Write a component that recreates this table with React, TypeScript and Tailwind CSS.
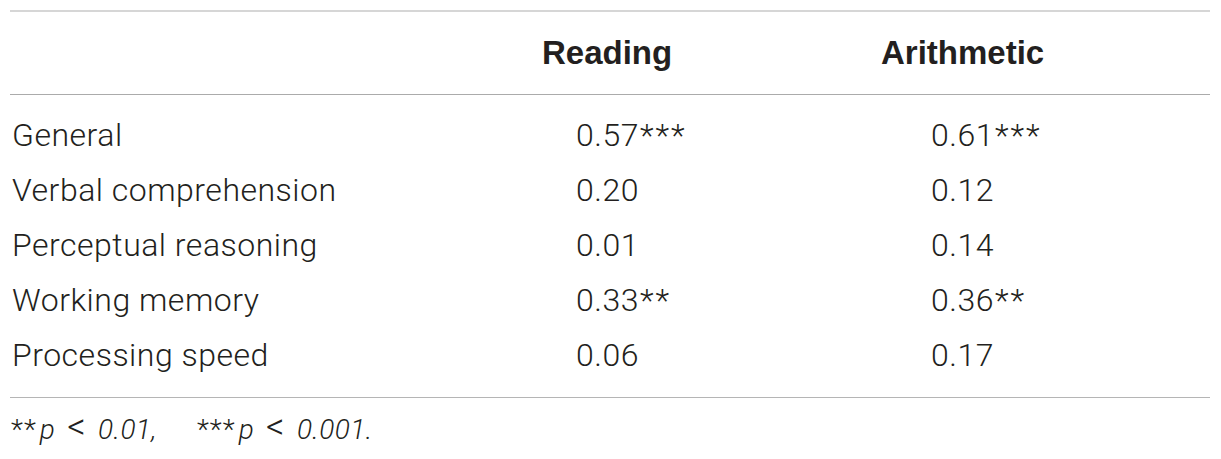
const rows = [
  { label: "General", reading: ["0.57", "***"], arithmetic: ["0.61", "***"] },
  { label: "Verbal comprehension", reading: ["0.20", ""], arithmetic: ["0.12", ""] },
  { label: "Perceptual reasoning", reading: ["0.01", ""], arithmetic: ["0.14", ""] },
  { label: "Working memory", reading: ["0.33", "**"], arithmetic: ["0.36", "**"] },
  { label: "Processing speed", reading: ["0.06", ""], arithmetic: ["0.17", ""] },
];

const body = "font-['Roboto',sans-serif] font-light";

function Value({ v }: { v: string[] }) {
  return (
    <>
      {v[0]}
      {v[1] && <span className="tracking-[2px] ml-[1px]">{v[1]}</span>}
    </>
  );
}

function PValue({ stars, value }: { stars: string; value: string }) {
  return (
    <>
      <span className="tracking-[1px]">{stars}</span>
      <span className="italic ml-[3px]">p</span>
      <span className="ml-[12px] text-[36px] leading-[30px]">&lt;</span>
      <span className="italic ml-[12px]">{value}</span>
    </>
  );
}

export default function App() {
  return (
    <div className="bg-white w-[1221px] h-[459px] text-[#231f20]">
      <div className="ml-[10px] w-[1200px] pt-[10px]">
        {/* header */}
        <div className="grid grid-cols-[532px_339px_1fr] border-t-2 border-[#d6d6d6] border-b border-b-[#ababab] pt-[24px] pb-[25px] font-['Liberation_Sans',Arial,sans-serif] font-bold text-[33px] leading-[33px]">
          <div />
          <div>Reading</div>
          <div>Arithmetic</div>
        </div>

        {/* rows */}
        <div className={`pt-[13px] pb-[14px] border-b border-[#b5b5b5] ${body} text-[32px] leading-[55px] tracking-[0.5px]`}>
          {rows.map((r) => (
            <div key={r.label} className="grid grid-cols-[532px_339px_1fr]">
              <div className="pl-[2px]">{r.label}</div>
              <div className="pl-[34px]">
                <Value v={r.reading} />
              </div>
              <div className="pl-[50px]">
                <Value v={r.arithmetic} />
              </div>
            </div>
          ))}
        </div>

        {/* footnote */}
        <div className={`pt-[14px] pl-[1px] ${body} text-[28px] leading-[30px] tracking-[0.4px]`}>
          <PValue stars="**" value="0.01," />
          <span className="ml-[40px]" />
          <PValue stars="***" value="0.001." />
        </div>
      </div>
    </div>
  );
}
